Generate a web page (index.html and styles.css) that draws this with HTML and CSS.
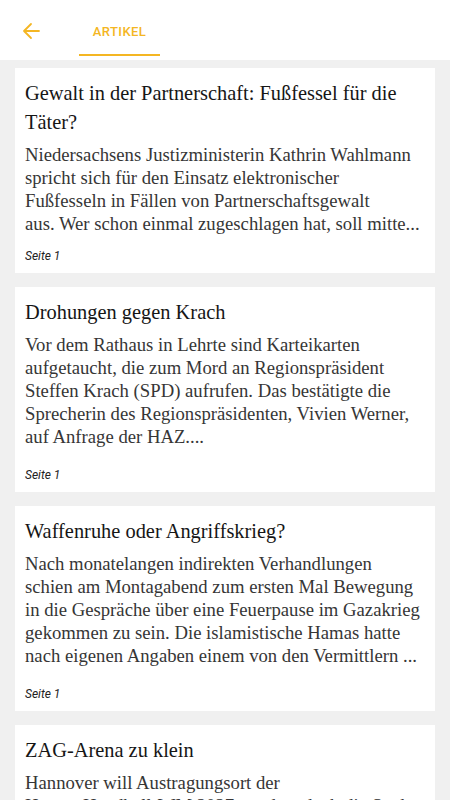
FILE: index.html
```html
<!doctype html>
<html lang="de">
  <head>
    <meta charset="UTF-8" />
    <meta name="viewport" content="width=device-width, initial-scale=1.0" />
    <title>Artikel</title>
    <link rel="stylesheet" href="styles.css">
  </head>
  <body>
    <header class="topbar">
      <button class="back" aria-label="Zurück">
        <svg width="18" height="18" viewBox="0 0 18 18" fill="none">
          <path d="M17 9H2M9 2L2 9l7 7" stroke="currentColor" stroke-width="1.8" stroke-linecap="round" stroke-linejoin="round"/>
        </svg>
      </button>
      <nav class="tabs">
        <a class="tab active" href="#">ARTIKEL</a>
      </nav>
    </header>

    <main class="list">
      <article class="card">
        <h2 class="card-title">Gewalt in der Partnerschaft: Fußfessel für die Täter?</h2>
        <p class="card-text">Niedersachsens Justizministerin Kathrin Wahlmann<br>spricht sich für den Einsatz elektronischer<br>Fußfesseln in Fällen von Partnerschaftsgewalt<br>aus. Wer schon einmal zugeschlagen hat, soll mitte...</p>
        <span class="card-page">Seite 1</span>
      </article>

      <article class="card">
        <h2 class="card-title">Drohungen gegen Krach</h2>
        <p class="card-text">Vor dem Rathaus in Lehrte sind Karteikarten aufgetaucht, die zum Mord an Regionspräsident Steffen Krach (SPD) aufrufen. Das bestätigte die Sprecherin des Regionspräsidenten, Vivien Werner, auf Anfrage der HAZ....</p>
        <span class="card-page">Seite 1</span>
      </article>

      <article class="card">
        <h2 class="card-title">Waffenruhe oder Angriffskrieg?</h2>
        <p class="card-text">Nach monatelangen indirekten Verhandlungen<br>schien am Montagabend zum ersten Mal Bewegung<br>in die Gespräche über eine Feuerpause im Gazakrieg<br>gekommen zu sein. Die islamistische Hamas hatte<br>nach eigenen Angaben einem von den Vermittlern ...</p>
        <span class="card-page">Seite 1</span>
      </article>

      <article class="card">
        <h2 class="card-title">ZAG-Arena zu klein</h2>
        <p class="card-text">Hannover will Austragungsort der<br>Herren‑Handball‑WM 2027 werden, doch die Stadt hat ein Problem: Die Halle ist zu klein...</p>
        <span class="card-page">Seite 1</span>
      </article>
    </main>
  </body>
</html>
```

FILE: styles.css
```css
:root {
  --accent: #f4b623;
  --background: #f0f0f0;
  --card: #ffffff;
  --title: #161616;
  --text: #363636;
}

body {
  margin: 0;
  background-color: var(--background);
  font-family: "Liberation Serif", serif;
}

.topbar {
  display: flex;
  align-items: stretch;
  height: 60px;
  background-color: var(--card);
}

.back {
  display: flex;
  align-items: center;
  justify-content: center;
  width: 62px;
  height: 61px;
  padding: 0;
  border: none;
  background: none;
  color: var(--accent);
  cursor: pointer;
}

.tabs {
  display: flex;
}

.tab {
  display: flex;
  align-items: center;
  justify-content: center;
  width: 81px;
  height: 46px;
  padding-top: 8px;
  margin-left: 17px;
  border-bottom: 2px solid var(--accent);
  color: var(--accent);
  font-family: Roboto, "Liberation Sans", sans-serif;
  font-weight: 500;
  font-size: 13px;
  letter-spacing: 0.4px;
  text-decoration: none;
}

.list {
  display: flex;
  flex-direction: column;
  gap: 14px;
  padding: 8px 15px 14px;
}

.card {
  display: flex;
  flex-direction: column;
  height: 205px;
  box-sizing: border-box;
  padding: 11px 8px 9px 10px;
  background-color: var(--card);
  overflow: hidden;
}

.card-title {
  margin: 0;
  color: var(--title);
  font-family: "Liberation Serif", serif;
  font-weight: 400;
  font-size: 20.4px;
  line-height: 29px;
}

.card-text {
  margin: 6px 0 0;
  color: var(--text);
  font-family: "Liberation Serif", serif;
  font-size: 18.7px;
  line-height: 23px;
}

.card-page {
  margin-top: auto;
  color: #222222;
  font-family: Roboto, "Liberation Sans", sans-serif;
  font-style: italic;
  font-size: 12px;
  line-height: 16px;
}
```
